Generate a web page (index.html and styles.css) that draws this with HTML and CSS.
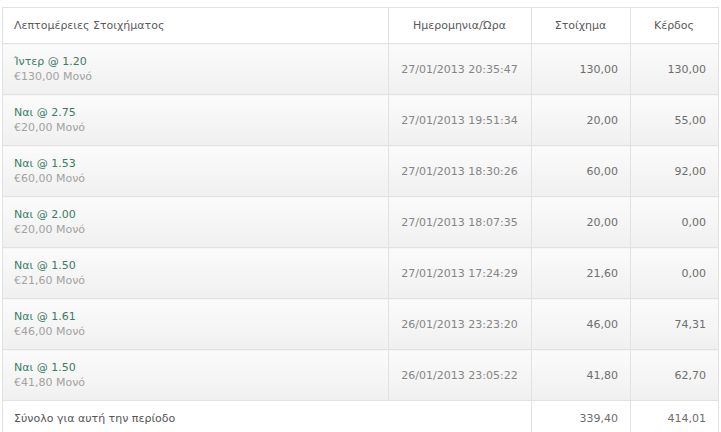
FILE: index.html
```html
<!DOCTYPE html>
<html>
<head>
<meta charset="utf-8">
<link rel="stylesheet" href="styles.css">
</head>
<body>
<div class="wrap">
<table class="bets">
  <colgroup>
    <col class="c1"><col class="c2"><col class="c3"><col class="c4">
  </colgroup>
  <thead>
    <tr>
      <th class="left">Λεπτομέρειες Στοιχήματος</th>
      <th>Ημερομηνια/Ώρα</th>
      <th>Στοίχημα</th>
      <th>Κέρδος</th>
    </tr>
  </thead>
  <tbody>
    <tr>
      <td class="det"><div class="sel">Ίντερ @ 1.20</div><div class="sub">€130,00 Μονό</div></td>
      <td class="date">27/01/2013 20:35:47</td>
      <td class="num">130,00</td>
      <td class="num">130,00</td>
    </tr>
    <tr>
      <td class="det"><div class="sel">Ναι @ 2.75</div><div class="sub">€20,00 Μονό</div></td>
      <td class="date">27/01/2013 19:51:34</td>
      <td class="num">20,00</td>
      <td class="num">55,00</td>
    </tr>
    <tr>
      <td class="det"><div class="sel">Ναι @ 1.53</div><div class="sub">€60,00 Μονό</div></td>
      <td class="date">27/01/2013 18:30:26</td>
      <td class="num">60,00</td>
      <td class="num">92,00</td>
    </tr>
    <tr>
      <td class="det"><div class="sel">Ναι @ 2.00</div><div class="sub">€20,00 Μονό</div></td>
      <td class="date">27/01/2013 18:07:35</td>
      <td class="num">20,00</td>
      <td class="num">0,00</td>
    </tr>
    <tr>
      <td class="det"><div class="sel">Ναι @ 1.50</div><div class="sub">€21,60 Μονό</div></td>
      <td class="date">27/01/2013 17:24:29</td>
      <td class="num">21,60</td>
      <td class="num">0,00</td>
    </tr>
    <tr>
      <td class="det"><div class="sel">Ναι @ 1.61</div><div class="sub">€46,00 Μονό</div></td>
      <td class="date">26/01/2013 23:23:20</td>
      <td class="num">46,00</td>
      <td class="num">74,31</td>
    </tr>
    <tr>
      <td class="det"><div class="sel">Ναι @ 1.50</div><div class="sub">€41,80 Μονό</div></td>
      <td class="date">26/01/2013 23:05:22</td>
      <td class="num">41,80</td>
      <td class="num">62,70</td>
    </tr>
  </tbody>
  <tfoot>
    <tr>
      <td class="tot" colspan="2">Σύνολο για αυτή την περίοδο</td>
      <td class="num">339,40</td>
      <td class="num">414,01</td>
    </tr>
  </tfoot>
</table>
</div>
</body>
</html>
```
FILE: styles.css
```css
html, body {
  margin: 0;
  padding: 0;
  background: #fff;
}
body {
  font-family: "DejaVu Sans", Verdana, sans-serif;
  font-size: 11px;
  color: #555;
}
.wrap {
  padding: 7px 0 0 2px;
}
.bets {
  width: 716px;
  table-layout: fixed;
  border-collapse: collapse;
  border: 1px solid #e2e2e2;
}
.c1 { width: 386px; }
.c2 { width: 143px; }
.c3 { width: 99px; }
.c4 { width: 88px; }
.bets th, .bets td {
  border: 1px solid #e2e2e2;
  padding: 0 12px 0 11px;
  vertical-align: middle;
}
.bets th {
  height: 35px;
  font-weight: normal;
  color: #5a5a5a;
  text-align: center;
  background: #fff;
}
.bets th.left {
  text-align: left;
}
.bets tbody td {
  height: 50px;
  background: linear-gradient(#fbfbfb, #f0f0f0);
}
.sel {
  color: #3a7d66;
  line-height: 15px;
}
.sub {
  color: #a2a2a2;
  line-height: 15px;
}
.date {
  text-align: center;
  color: #858585;
}
.num {
  text-align: right;
  color: #6e6e6e;
}
.bets tfoot td {
  height: 34px;
  background: #fff;
}
.tot {
  color: #555;
}
```
